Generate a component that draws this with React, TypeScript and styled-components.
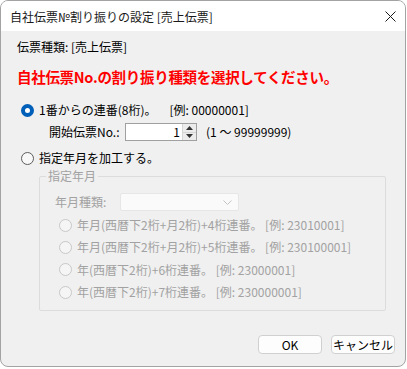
import React from 'react';
import styled, { createGlobalStyle } from 'styled-components';

const GlobalStyle = createGlobalStyle`
  html, body {
    margin: 0;
    padding: 0;
    background: #ffffff;
  }
  body {
    font-family: "Noto Sans CJK JP", "Noto Sans", sans-serif;
    font-size: 12px;
    color: #000;
  }
`;

const Window = styled.div`
  box-sizing: border-box;
  width: 406px;
  height: 367px;
  border: 1px solid #a3a3a3;
  border-radius: 8px;
  overflow: hidden;
  display: flex;
  flex-direction: column;
  background: #f0f0f0;
`;

const TitleBar = styled.div`
  height: 30px;
  background: #ffffff;
  display: flex;
  align-items: center;
  justify-content: space-between;
  padding: 0 9px 0 9px;
  font-size: 12px;
  color: #1a1a1a;
  flex-shrink: 0;
`;

const CloseIcon = styled.svg`
  width: 11px;
  height: 11px;
`;

const Body = styled.div`
  flex: 1;
  display: flex;
  flex-direction: column;
  padding-left: 16px;
`;

const Line = styled.div<{ $top: number }>`
  height: 20px;
  line-height: 20px;
  margin-top: ${p => p.$top}px;
  display: flex;
  align-items: center;
  white-space: nowrap;
`;

const Heading = styled(Line)`
  color: #ff0000;
  font-weight: bold;
  font-size: 14.5px;
  letter-spacing: -0.3px;
`;

const RadioRow = styled(Line)<{ $disabled?: boolean; $indent?: number }>`
  gap: 5px;
  padding-left: ${p => p.$indent ?? 4}px;
  color: ${p => (p.$disabled ? '#a2a2a2' : '#000')};
`;

const Radio = styled.span<{ $checked?: boolean; $disabled?: boolean }>`
  box-sizing: border-box;
  width: 13px;
  height: 13px;
  border-radius: 50%;
  flex-shrink: 0;
  background: ${p => (p.$disabled ? '#f5f5f5' : '#f8f8f8')};
  border: ${p =>
    p.$checked ? '4px solid #005fb8' : p.$disabled ? '1px solid #c8c8c8' : '1px solid #5c5c5c'};
  ${p => p.$checked && 'background: #ffffff;'}
`;

const Note = styled.span`
  margin-left: 8px;
`;

const FieldLabel = styled.span<{ $width: number }>`
  display: inline-block;
  width: ${p => p.$width}px;
`;

const StartRow = styled(Line)`
  padding-left: 32px;
`;

const SpinBox = styled.div`
  box-sizing: border-box;
  width: 72px;
  height: 18px;
  border: 1px solid #a0a0a0;
  background: #fff;
  display: flex;
  align-items: stretch;
`;

const SpinValue = styled.span`
  flex: 1;
  text-align: right;
  line-height: 16px;
  padding-right: 2px;
`;

const SpinButtons = styled.div`
  width: 13px;
  display: flex;
  flex-direction: column;
  border-left: 1px solid #d6d6d6;
`;

const SpinButton = styled.div`
  flex: 1;
  background: #ececec;
  display: flex;
  align-items: center;
  justify-content: center;
  & + & {
    border-top: 1px solid #d6d6d6;
  }
`;

const Range = styled.span`
  margin-left: 9px;
`;

const Group = styled.fieldset`
  margin: 0 0 0 22px;
  width: 347px;
  box-sizing: border-box;
  height: 143px;
  border: 1px solid #dcdcdc;
  border-radius: 2px;
  padding: 0;
  color: #a2a2a2;
`;

const Legend = styled.legend`
  margin-left: 6px;
  padding: 0 2px;
  line-height: 16px;
  font-size: 12px;
  color: #a2a2a2;
`;

const TypeRow = styled(Line)`
  padding-left: 15px;
`;

const Select = styled.div`
  box-sizing: border-box;
  width: 119px;
  height: 18px;
  border: 1px solid #e6e6e6;
  border-radius: 2px;
  background: #fafafa;
  display: flex;
  align-items: center;
  justify-content: flex-end;
  padding-right: 6px;
`;

const GroupRadios = styled.div`
  display: flex;
  flex-direction: column;
  margin-top: 2px;
`;

const GroupRadioRow = styled(RadioRow)`
  height: 22.3px;
  line-height: 22px;
`;

const Footer = styled.div`
  margin-top: auto;
  display: flex;
  justify-content: flex-end;
  gap: 9px;
  padding: 0 10px 12px 0;
`;

const Button = styled.button`
  box-sizing: border-box;
  width: 64px;
  height: 19px;
  border: 1px solid #d0d0d0;
  border-radius: 4px;
  background: #fdfdfd;
  font-family: inherit;
  font-size: 12px;
  line-height: 16px;
  padding: 0;
  color: #000;
`;

const groupOptions = [
  '年月(西暦下2桁+月2桁)+4桁連番。 [例: 23010001]',
  '年月(西暦下2桁+月2桁)+5桁連番。 [例: 230100001]',
  '年(西暦下2桁)+6桁連番。 [例: 23000001]',
  '年(西暦下2桁)+7桁連番。 [例: 230000001]',
];

export default function App(): React.ReactElement {
  return (
    <>
      <GlobalStyle />
      <Window>
        <TitleBar>
          <span>自社伝票№割り振りの設定 [売上伝票]</span>
          <CloseIcon viewBox="0 0 11 11">
            <path d="M0.5 0.5 L10.5 10.5 M10.5 0.5 L0.5 10.5" stroke="#1a1a1a" strokeWidth="1" fill="none" />
          </CloseIcon>
        </TitleBar>
        <Body>
          <Line $top={6}>伝票種類: [売上伝票]</Line>
          <Heading $top={10}>自社伝票No.の割り振り種類を選択してください。</Heading>
          <RadioRow $top={13}>
            <Radio $checked />
            <span>1番からの連番(8桁)。</span>
            <Note>[例: 00000001]</Note>
          </RadioRow>
          <StartRow $top={2}>
            <FieldLabel $width={76}>開始伝票No.:</FieldLabel>
            <SpinBox>
              <SpinValue>1</SpinValue>
              <SpinButtons>
                <SpinButton>
                  <svg width="7" height="4" viewBox="0 0 7 4"><path d="M3.5 0 L7 4 L0 4 Z" fill="#333" /></svg>
                </SpinButton>
                <SpinButton>
                  <svg width="7" height="4" viewBox="0 0 7 4"><path d="M0 0 L7 0 L3.5 4 Z" fill="#333" /></svg>
                </SpinButton>
              </SpinButtons>
            </SpinBox>
            <Range>(1 ～ 99999999)</Range>
          </StartRow>
          <RadioRow $top={6}>
            <Radio />
            <span>指定年月を加工する。</span>
          </RadioRow>
          <Group>
            <Legend>指定年月</Legend>
            <TypeRow $top={8}>
              <FieldLabel $width={65}>年月種類:</FieldLabel>
              <Select>
                <svg width="9" height="5" viewBox="0 0 9 5">
                  <path d="M0.5 0.5 L4.5 4.5 L8.5 0.5" stroke="#c4c4c4" fill="none" />
                </svg>
              </Select>
            </TypeRow>
            <GroupRadios>
              {groupOptions.map(o => (
                <GroupRadioRow key={o} $top={0} $disabled $indent={19}>
                  <Radio $disabled />
                  <span>{o}</span>
                </GroupRadioRow>
              ))}
            </GroupRadios>
          </Group>
          <Footer>
            <Button>OK</Button>
            <Button>キャンセル</Button>
          </Footer>
        </Body>
      </Window>
    </>
  );
}
